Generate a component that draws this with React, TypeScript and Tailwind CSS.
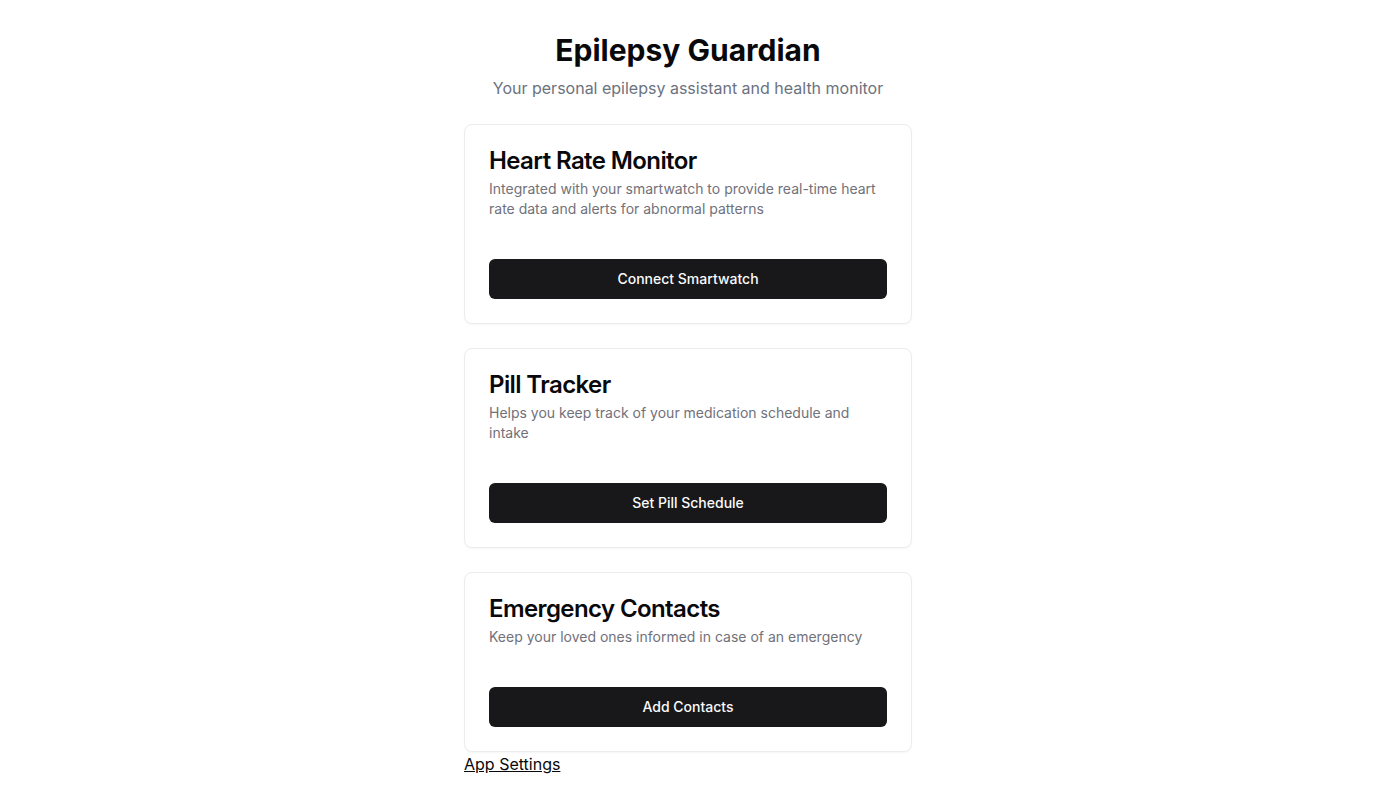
const cards = [
  {
    title: "Heart Rate Monitor",
    description:
      "Integrated with your smartwatch to provide real-time heart rate data and alerts for abnormal patterns",
    action: "Connect Smartwatch",
  },
  {
    title: "Pill Tracker",
    description: "Helps you keep track of your medication schedule and intake",
    action: "Set Pill Schedule",
  },
  {
    title: "Emergency Contacts",
    description: "Keep your loved ones informed in case of an emergency",
    action: "Add Contacts",
  },
];

const FeatureCard = ({ title, description, action }: { title: string; description: string; action: string }) => {
  return (
    <div className="rounded-lg border border-[#ececee] bg-white text-[#09090b] shadow-[0_1px_2px_rgba(0,0,0,0.04)]">
      <div className="flex flex-col gap-1.5 p-6">
        <h3 className="text-2xl leading-none font-semibold tracking-tight">{title}</h3>
        <p className="text-sm text-[#71717a]">{description}</p>
      </div>
      <div className="px-6 pt-4 pb-6">
        <button className="h-10 w-full rounded-md bg-[#18181b] px-4 text-sm font-medium text-[#fafafa]">
          {action}
        </button>
      </div>
    </div>
  );
};

export default function App() {
  return (
    <div className="min-h-screen bg-white font-['Inter',sans-serif] text-[#09090b]">
      <div className="mx-auto flex max-w-md flex-col pt-8">
        <h1 className="text-center text-3xl font-bold">Epilepsy Guardian</h1>
        <p className="mt-2 text-center text-base text-[#6b7280]">
          Your personal epilepsy assistant and health monitor
        </p>
        <div className="mt-6 flex flex-col gap-6">
          {cards.map((c) => (
            <FeatureCard key={c.title} {...c} />
          ))}
        </div>
        <a href="#" className="self-start text-base text-[#09090b] underline">
          App Settings
        </a>
      </div>
    </div>
  );
}
